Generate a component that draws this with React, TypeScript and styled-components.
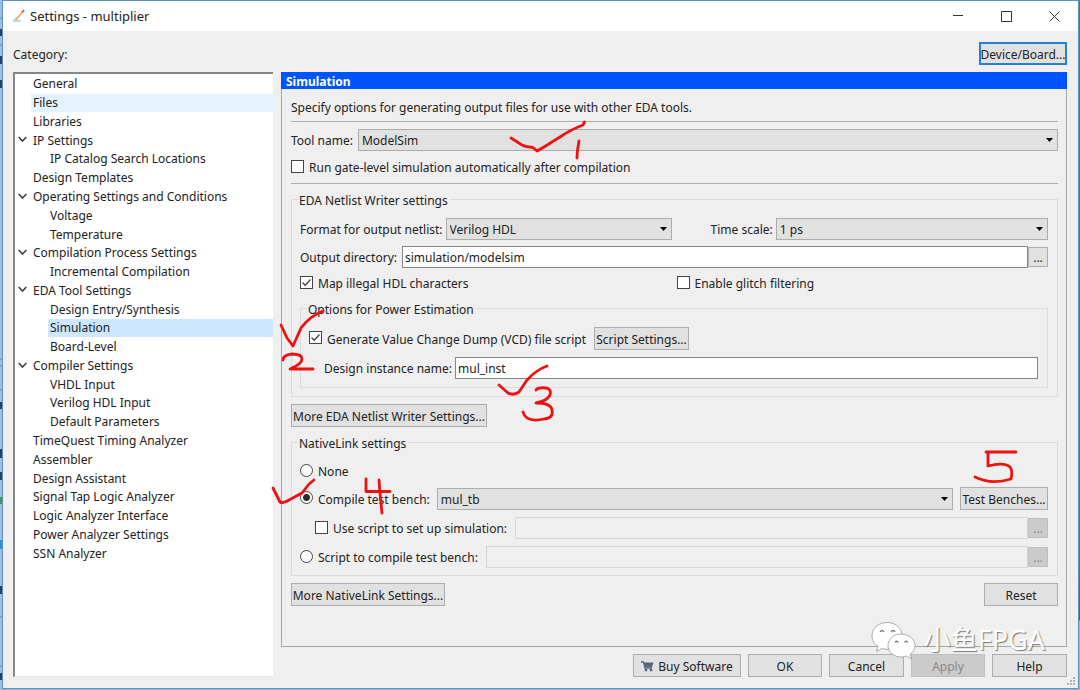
import React from "react";
import styled, { createGlobalStyle, css } from "styled-components";

const svgUrl = (body: string, w: number, h: number) =>
  `url("data:image/svg+xml,${encodeURIComponent(
    `<svg xmlns='http://www.w3.org/2000/svg' width='${w}' height='${h}' viewBox='0 0 ${w} ${h}'>${body}</svg>`
  )}")`;

const arrow = svgUrl("<path d='M0 0H7L3.5 4Z' fill='#000'/>", 7, 4);
const tick = svgUrl("<path d='M1.5 5.5L4.2 8.2L9.5 2.5' fill='none' stroke='#444' stroke-width='1.3'/>", 11, 11);

const Global = createGlobalStyle`
  *, *::before, *::after { box-sizing: border-box; }
  body { margin: 0; }
  body, button, input, select {
    font-family: "Noto Sans", "Noto Sans CJK SC", sans-serif;
    font-size: 12px;
    line-height: 18px;
    color: #222;
  }
`;

const Desktop = styled.div`
  position: relative;
  display: flex;
  min-height: 100vh;
  padding: 0 1px 1px 2px;
  background: linear-gradient(#3f74b5 0 560px, #3568a8 620px, #8db6e0 621px);
  overflow: hidden;
`;

const Behind = styled.svg`
  position: absolute;
  left: 0;
  top: 0;
`;

const Window = styled.main`
  flex: 1;
  min-width: 0;
  display: flex;
  flex-direction: column;
  border: 1px solid #5b92c8;
  background: #efefef;
`;

const TitleBar = styled.header`
  display: flex;
  align-items: center;
  height: 30px;
  padding-left: 10px;
  background: #fff;
`;

const Title = styled.h1`
  flex: 1;
  margin: 0 0 0 5px;
  font-size: 13px;
  font-weight: 400;
`;

const CaptionButton = styled.button`
  display: grid;
  place-items: center;
  width: 48px;
  height: 30px;
  padding: 0;
  border: 0;
  background: none;
`;

const TopRow = styled.div`
  display: flex;
  align-items: center;
  justify-content: space-between;
  padding: 11px 11px 7px 10px;
`;

const Button = styled.button<{ $width?: number; $focused?: boolean }>`
  display: inline-flex;
  flex: none;
  align-items: center;
  justify-content: center;
  gap: 4px;
  height: 23px;
  padding: 2px 2px 0;
  ${(p) => p.$width && css`width: ${p.$width}px;`}
  border: 1px solid #adadad;
  background: #e1e1e1;
  white-space: nowrap;
  ${(p) => p.$focused && css`border: 2px solid #2a7fcf; padding: 2px 0 0;`}
  &:disabled { background: #cbcbcb; border-color: #c0c0c0; color: #888; }
`;

const Columns = styled.div`
  flex: 1;
  display: flex;
  gap: 8px;
  padding: 0 11px 0 10px;
`;

const TreePane = styled.nav`
  flex: none;
  width: 260px;
  margin-bottom: -30px;
  border: solid #e3e3e3;
  border-width: 2px 0 1px 2px;
  border-top-color: #868686;
  border-left-color: #868686;
  background: #fff;
`;

const Tree = styled.ul`
  display: grid;
  grid-auto-rows: 1fr;
  height: 488px;
  margin: 1px 0 0;
  padding: 0;
  list-style: none;
`;

const TreeItem = styled.li<{ $depth: number; $tone?: string }>`
  display: flex;
  align-items: center;
  padding-left: ${(p) => (p.$depth ? 33 : 16)}px;
  position: relative;
  & > span {
    flex: 1;
    padding-left: 2px;
    background: ${(p) => p.$tone || "none"};
  }
`;

const Chevron = styled.svg`
  position: absolute;
  left: 3px;
  top: 5px;
`;

const Panel = styled.section`
  flex: 1;
  min-width: 0;
  border: 1px solid #a5a5a5;
  border-top: 0;
`;

const PanelTitle = styled.h2`
  height: 17px;
  margin: 0 -1px;
  padding-left: 5px;
  background: #0054ff;
  color: #fff;
  font-size: 12px;
  line-height: 20px;
  font-weight: 700;
`;

const Stack = styled.div<{ $gap?: number }>`
  display: flex;
  flex-direction: column;
  gap: ${(p) => p.$gap ?? 7}px;
`;

const PanelBody = styled(Stack)`
  padding: 9px 8px 0 9px;
`;

const Intro = styled.p`
  height: 16px;
  margin: 0;
  line-height: 20px;
`;

const Rule = styled.hr`
  width: 100%;
  height: 1px;
  margin: 0;
  border: 0;
  background: #adadad;
`;

const Row = styled.div<{ $indent?: number; $gap?: number }>`
  display: flex;
  align-items: center;
  gap: ${(p) => p.$gap ?? 5}px;
  padding-left: ${(p) => p.$indent ?? 0}px;
`;

const Spread = styled(Row)`
  justify-content: space-between;
`;

const Field = styled.label`
  flex: none;
  padding-top: 2px;
  white-space: nowrap;
`;

const Select = styled.select<{ $width?: number }>`
  appearance: none;
  ${(p) => (p.$width ? css`flex: none; width: ${p.$width}px;` : css`flex: 1; min-width: 0;`)}
  height: 22px;
  padding: 2px 18px 0 3px;
  border: 1px solid #adadad;
  border-radius: 0;
  background: #e1e1e1 ${arrow} no-repeat right 4px top 8px;
`;

const TextInput = styled.input`
  flex: 1;
  min-width: 0;
  height: 22px;
  padding: 1px 2px 0;
  border: 1px solid #868686;
  background: #fff;
  &:disabled { border-color: #d6d6d6; background: #efefef; }
`;

const BrowseGroup = styled.div`
  flex: 1;
  min-width: 0;
  display: flex;
  align-items: center;
`;

const Browse = styled(Button)`
  width: 20px;
  height: 20px;
`;

const CheckLabel = styled.label`
  display: flex;
  flex: none;
  align-items: center;
  gap: 5px;
  height: 18px;
  padding-top: 2px;
  white-space: nowrap;
`;

const Check = styled.input`
  appearance: none;
  flex: none;
  width: 13px;
  height: 13px;
  margin: 0 0 4px;
  border: 1px solid #444;
  background: #fff;
  &:checked { background: #fff ${tick} no-repeat center; }
`;

const Radio = styled(Check)`
  border-radius: 50%;
  &:checked { background: radial-gradient(circle, #2b2b2b 0 3px, #fff 4px); }
`;

const Half = styled.div`
  flex: 1;
`;

const GroupBox = styled.fieldset<{ $low?: boolean }>`
  min-width: 0;
  margin: -2px 0 0;
  padding: ${(p) => (p.$low ? "9px 9px 7px 8px" : "8px 9px 8px 8px")};
  border: 1px solid #dcdcdc;
  & & { margin: 0; }
`;

const Legend = styled.legend`
  margin-left: -1px;
  padding: 3px 2px 0 0;
`;

const Footer = styled.footer`
  display: flex;
  justify-content: flex-end;
  gap: 7px;
  padding: 7px 11px 11px;
  margin-left: 280px;
`;

const Grip = styled.svg`
  position: absolute;
  right: 4px;
  bottom: 4px;
`;

const Ink = styled.svg`
  position: absolute;
  left: 0;
  top: 0;
  pointer-events: none;
`;

const Watermark = styled.div`
  position: absolute;
  right: 35px;
  bottom: 30px;
  display: flex;
  align-items: center;
  gap: 7px;
  color: #fff;
  font-size: 27px;
  line-height: 40px;
  text-shadow: 1px 1px 1px #777;
  pointer-events: none;
`;

type Node = { label: string; depth?: number; open?: boolean; tone?: string };

const nodes: Node[] = [
  { label: "General" },
  { label: "Files", tone: "#e4f2fe" },
  { label: "Libraries" },
  { label: "IP Settings", open: true },
  { label: "IP Catalog Search Locations", depth: 1 },
  { label: "Design Templates" },
  { label: "Operating Settings and Conditions", open: true },
  { label: "Voltage", depth: 1 },
  { label: "Temperature", depth: 1 },
  { label: "Compilation Process Settings", open: true },
  { label: "Incremental Compilation", depth: 1 },
  { label: "EDA Tool Settings", open: true },
  { label: "Design Entry/Synthesis", depth: 1 },
  { label: "Simulation", depth: 1, tone: "#cce7ff" },
  { label: "Board-Level", depth: 1 },
  { label: "Compiler Settings", open: true },
  { label: "VHDL Input", depth: 1 },
  { label: "Verilog HDL Input", depth: 1 },
  { label: "Default Parameters", depth: 1 },
  { label: "TimeQuest Timing Analyzer" },
  { label: "Assembler" },
  { label: "Design Assistant" },
  { label: "Signal Tap Logic Analyzer" },
  { label: "Logic Analyzer Interface" },
  { label: "Power Analyzer Settings" },
  { label: "SSN Analyzer" },
];

export default function App() {
  return (
    <Desktop>
      <Global />
      <Behind width="2" height="690" fill="none">
        <path d="M0 0H2V690H0Z" fill="#9fbfe0" />
        <path d="M0 18H2M0 45H2M0 359H2M0 366H2M0 390H2M0 617H2M0 666H2" stroke="#5c86b8" />
        <path d="M1 29V36M1 56V64M1 80V88M1 402V409M1 449V458M1 472V480M1 586V594M1 673V680" stroke="#2b3f5c" strokeWidth="2" />
        <path d="M1 497V504" stroke="#4f8f5a" strokeWidth="2" />
        <path d="M1 540V549" stroke="#2e8fd8" strokeWidth="2" />
      </Behind>
      <Window>
        <TitleBar>
          <svg width="12" height="14" viewBox="0 0 12 14" fill="none">
            <path d="M0 11L3 8L4.500 10L8 11.500V13H0Z" fill="#b5dcea" />
            <path d="M3 10.500L10 2.500" stroke="#f0a040" strokeWidth="1.4" />
            <path d="M9 3.500L11 1" stroke="#e2603a" strokeWidth="2" />
          </svg>
          <Title>Settings - multiplier</Title>
          <CaptionButton aria-label="Minimize">
            <svg width="11" height="11" stroke="#333"><path d="M0 4.500H10" /></svg>
          </CaptionButton>
          <CaptionButton aria-label="Maximize">
            <svg width="11" height="11" stroke="#333" fill="none"><path d="M.5.5H10.500V10.500H.5Z" /></svg>
          </CaptionButton>
          <CaptionButton aria-label="Close">
            <svg width="11" height="11" stroke="#333"><path d="M.5.5L10.500 10.500M10.500.5L.5 10.500" /></svg>
          </CaptionButton>
        </TitleBar>

        <TopRow>
          <Field as="span">Category:</Field>
          <Button $width={88} $focused>Device/Board...</Button>
        </TopRow>

        <Columns>
          <TreePane aria-label="Category">
            <Tree>
              {nodes.map((n) => (
                <TreeItem key={n.label} $depth={n.depth ?? 0} $tone={n.tone}>
                  {n.open && (
                    <Chevron width="9" height="7" fill="none" stroke="#444" strokeWidth="1.7">
                      <path d="M.7 1L4.500 5L8.300 1" />
                    </Chevron>
                  )}
                  <span>{n.label}</span>
                </TreeItem>
              ))}
            </Tree>
          </TreePane>

          <Panel>
            <PanelTitle>Simulation</PanelTitle>
            <PanelBody>
              <Intro>Specify options for generating output files for use with other EDA tools.</Intro>
              <Rule />
              <Row>
                <Field htmlFor="tool">Tool name:</Field>
                <Select id="tool"><option>ModelSim</option></Select>
              </Row>
              <CheckLabel>
                <Check type="checkbox" />
                Run gate-level simulation automatically after compilation
              </CheckLabel>
              <Rule />

              <GroupBox>
                <Legend>EDA Netlist Writer settings</Legend>
                <Stack $gap={6}>
                  <Row $gap={3}>
                    <Field htmlFor="format">Format for output netlist:</Field>
                    <Select id="format" $width={226}><option>Verilog HDL</option></Select>
                    <Row $indent={36}>
                      <Field htmlFor="scale">Time scale:</Field>
                    </Row>
                    <Select id="scale"><option>1 ps</option></Select>
                  </Row>
                  <Row>
                    <Field htmlFor="outdir">Output directory:</Field>
                    <BrowseGroup>
                      <TextInput id="outdir" defaultValue="simulation/modelsim" />
                      <Browse>...</Browse>
                    </BrowseGroup>
                  </Row>
                  <Row>
                    <Half><CheckLabel><Check type="checkbox" defaultChecked />Map illegal HDL characters</CheckLabel></Half>
                    <Half><CheckLabel><Check type="checkbox" />Enable glitch filtering</CheckLabel></Half>
                  </Row>
                  <GroupBox>
                    <Legend>Options for Power Estimation</Legend>
                    <Stack>
                      <Row $gap={8}>
                        <CheckLabel>
                          <Check type="checkbox" defaultChecked />
                          Generate Value Change Dump (VCD) file script
                        </CheckLabel>
                        <Button $width={95}>Script Settings...</Button>
                      </Row>
                      <Row $indent={15} $gap={3}>
                        <Field htmlFor="instance">Design instance name:</Field>
                        <TextInput id="instance" defaultValue="mul_inst" />
                      </Row>
                    </Stack>
                  </GroupBox>
                </Stack>
              </GroupBox>

              <Row>
                <Button $width={196}>More EDA Netlist Writer Settings...</Button>
              </Row>

              <GroupBox $low>
                <Legend>NativeLink settings</Legend>
                <Stack>
                  <CheckLabel><Radio type="radio" name="native" />None</CheckLabel>
                  <Row $gap={7}>
                    <CheckLabel><Radio type="radio" name="native" defaultChecked />Compile test bench:</CheckLabel>
                    <Select aria-label="Test bench"><option>mul_tb</option></Select>
                    <Button $width={88}>Test Benches...</Button>
                  </Row>
                  <Row $indent={15} $gap={8}>
                    <CheckLabel><Check type="checkbox" />Use script to set up simulation:</CheckLabel>
                    <BrowseGroup>
                      <TextInput aria-label="Setup script" disabled />
                      <Browse disabled>...</Browse>
                    </BrowseGroup>
                  </Row>
                  <Row $gap={8}>
                    <CheckLabel><Radio type="radio" name="native" />Script to compile test bench:</CheckLabel>
                    <BrowseGroup>
                      <TextInput aria-label="Compile script" disabled />
                      <Browse disabled>...</Browse>
                    </BrowseGroup>
                  </Row>
                </Stack>
              </GroupBox>

              <Spread>
                <Button $width={154}>More NativeLink Settings...</Button>
                <Button $width={74}>Reset</Button>
              </Spread>
            </PanelBody>
          </Panel>
        </Columns>

        <Footer>
          <Button $width={108}>
            <svg width="13" height="11" viewBox="0 0 13 11">
              <path d="M0 1H2.500L4 7H11" fill="none" stroke="#55687a" strokeWidth="1.300" />
              <path d="M2.500 1.500H12.500L11 6H4Z" fill="#55687a" />
              <circle cx="5" cy="9" r="1.400" fill="#55687a" />
              <circle cx="10" cy="9" r="1.400" fill="#55687a" />
            </svg>
            Buy Software
          </Button>
          <Button $width={74}>OK</Button>
          <Button $width={75}>Cancel</Button>
          <Button $width={74} disabled>Apply</Button>
          <Button $width={75}>Help</Button>
        </Footer>
      </Window>

      <Grip width="9" height="9" fill="#b4b4b4">
        <path d="M6 0h2v2h-2zM6 3h2v2h-2zM6 6h2v2h-2zM3 3h2v2h-2zM3 6h2v2h-2zM0 6h2v2h-2z" />
      </Grip>

      <Watermark>
        <svg width="46" height="39" viewBox="0 0 46 38" fill="#fff" stroke="#9a9a9a" strokeWidth="0.8">
          <path d="M16 1C7 1 1 7 1 14.500C1 19 3.500 22.500 7 25L5.500 30L11 27C13 27.600 15 27.800 17 27.800C25 27.500 31 21.500 31 14.500C31 7 25 1 16 1Z" />
          <path d="M30 12.500C22.500 12.500 17 17.800 17 24C17 30.500 23 35.500 30 35.500C32 35.500 34 35.200 35.500 34.500L40.500 37.500L39 33C42 31 44 27.800 44 24C44 17.800 38 12.500 30 12.500Z" />
          <path d="M9 10.500q2-3 4 0M20 10.500q2-3 4 0M24 21q1.700-2.500 3.400 0M33.500 21q1.700-2.500 3.400 0" fill="none" stroke="#777" strokeWidth="1.300" />
        </svg>
        小鱼FPGA
      </Watermark>

      <Ink width="1080" height="690" fill="none" stroke="#ee1111" strokeWidth="2.800" strokeLinecap="round" strokeLinejoin="round">
        <path d="M511 138L522 145Q526 147 533 147.500L537 151L544 147L560 137Q570 130 583 125L584.500 122" />
        <path d="M579 141L578 147Q577 152 577 158" />
        <path d="M281 325L287 338L293 346L301 328Q310 316 323 311" />
        <path d="M283 360Q283 355 292 354Q302 354 302 359Q302 364 290 369H313" />
        <path d="M499 385L508 393Q513 396 519 392L527 380Q536 370 547 366" />
        <path d="M536 390Q538 387 546 388Q552 389 550 395Q547 401 536 403Q551 403 552 410Q554 418 544 419Q526 423 523 412" />
        <path d="M273 488L280 502Q283 504 289 500L302 493L309 484L314 480" />
        <path d="M366 479V491.500H390M379 480L380 493L382 513" />
        <path d="M1016 452H986M988 452V466Q1004 462 1010 467Q1013 471 1011 479Q991 485 975 477" />
      </Ink>
    </Desktop>
  );
}
